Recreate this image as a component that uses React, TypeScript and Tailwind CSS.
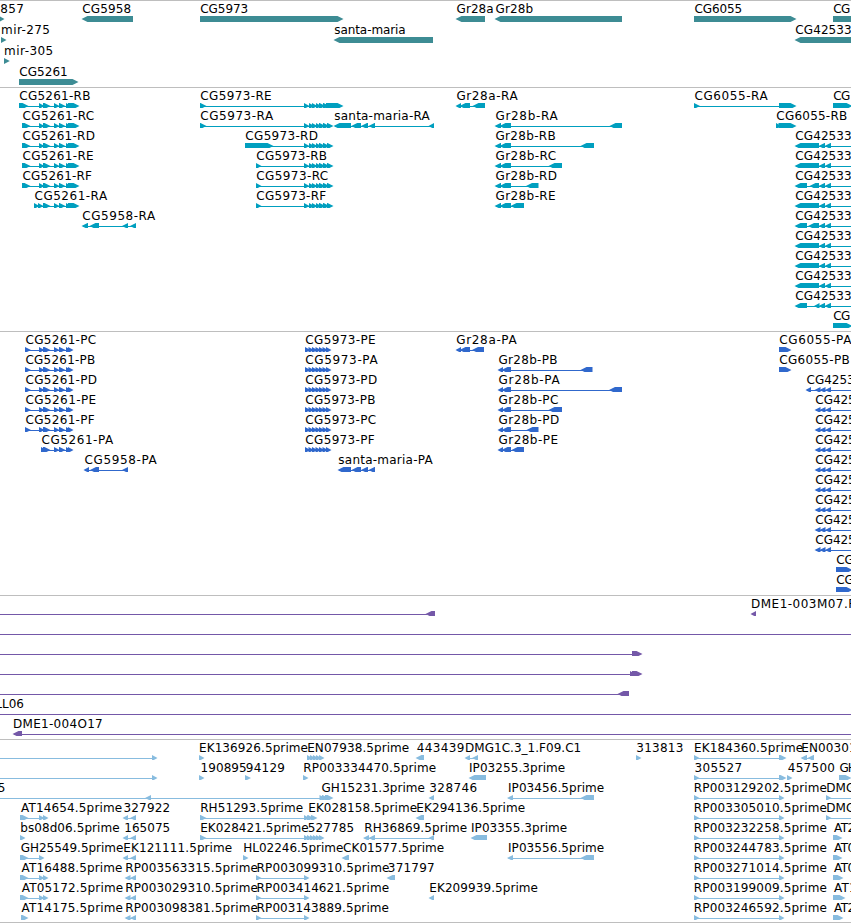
type Exon = [number, number];

type Feature = {
  label?: string;
  // first and last pixel column covered by the label
  from?: number;
  to?: number;
  dir: 1 | -1;
  exons: Exon[];
  line?: Exon;
};

type Track = {
  name: string;
  color: string;
  className: string;
  rowHeight: number;
  rows: Feature[][];
};

const fwd = (label: string, from: number, to: number, exons: Exon[], line?: Exon): Feature => ({
  label,
  from,
  to,
  dir: 1,
  exons,
  line,
});

const rev = (label: string, from: number, to: number, exons: Exon[], line?: Exon): Feature => ({
  label,
  from,
  to,
  dir: -1,
  exons,
  line,
});

// transcripts
const r5261: Exon[] = [[39, 44], [43, 50], [54, 59], [59, 65], [66, 71], [68, 79]];
const r5973: Exon[] = [[304, 309], [309, 314], [312, 317], [316, 321], [319, 325], [323, 329]];
const r5973End: Exon[] = [...r5973, [327, 333]];
const gr28b: Exon[] = [[495, 501], [500, 511]];
const r42533Tail: Exon[] = [[819, 825], [825, 831]];
const r42533 = (...exons: Exon[]) => rev("CG42533", 795.5, 851, [...exons, ...r42533Tail], [796, 851]);

// translations
const p5261: Exon[] = [[39, 44], [43, 50], [54, 59], [59, 65], [66, 71], [68, 73]];
const p5973: Exon[] = [[305, 310], [308.5, 313.5], [312, 317], [315.5, 320.5], [319, 324], [322.5, 327.5], [326, 331]];
const gr28bP: Exon[] = [[498, 503], [502, 511]];
const p425 = () => rev("CG425", 815.5, 855, [[815, 820.5], [820, 825.5], [825.5, 831]], [816, 851]);

// ESTs
const est5261: Exon[] = [[20, 28], [39, 44], [43, 48]];
const est5958: Exon[] = [[123, 128], [130.5, 136]];
const est5958Short: Exon[] = [[125, 130.5], [130.5, 136]];
const rp = (label: string) => fwd(label, 694.5, 826.3, [[694, 699], [779, 784]]);

const genes: Feature[][] = [
  [
    fwd("857", 0.5, 23.3, [[-1, 4]]),
    rev("CG5958", 82.5, 130.5, [[82, 133]]),
    fwd("CG5973", 200.5, 247.5, [[200, 343]]),
    rev("Gr28a", 456.7, 493, [[456, 485]]),
    rev("Gr28b", 495.7, 532.3, [[495, 622]]),
    fwd("CG6055", 694.7, 741.5, [[694, 796]]),
    fwd("CG", 833.5, 849.5, [[833, 870]]),
  ],
  [
    fwd("mir-275", 1.8, 49.3, [[1, 6]]),
    rev("santa-maria", 334.5, 405, [[334, 433]]),
    rev("CG42533", 795.5, 851, [[795, 870]]),
  ],
  [fwd("mir-305", 4.8, 52.5, [[4, 9.3]])],
  [fwd("CG5261", 19.5, 67, [[19, 78]])],
];

const transcripts: Feature[][] = [
  [
    fwd("CG5261-RB", 19.5, 89.7, [[19, 28], ...r5261]),
    fwd("CG5973-RE", 200.5, 271, [[200, 206], ...r5973, [326, 343]]),
    rev("Gr28a-RA", 456.7, 517, [[456, 461], [460, 470], [473, 485]]),
    fwd("CG6055-RA", 694.7, 767, [[694, 699.5], [779, 796]]),
    fwd("CG", 833.5, 849.5, [[833, 852]]),
  ],
  [
    fwd("CG5261-RC", 22.7, 93.5, [[22, 30], ...r5261]),
    fwd("CG5973-RA", 200.5, 272.5, [[200, 206], ...r5973End]),
    rev("santa-maria-RA", 334.5, 429, [[334, 351], [351.7, 361], [361.5, 368], [369, 375], [429, 434]]),
    rev("Gr28b-RA", 495.7, 557, [...gr28b, [610, 622]]),
    fwd("CG6055-RB", 776.5, 846.5, [[776, 781], [778.5, 796]]),
  ],
  [
    fwd("CG5261-RD", 22.7, 94.3, [[22, 30], ...r5261]),
    fwd("CG5973-RD", 245.5, 317.3, [[245, 273], ...r5973End]),
    rev("Gr28b-RB", 495.7, 555, [...gr28b, [581, 594]]),
    r42533([795, 819]),
  ],
  [
    fwd("CG5261-RE", 22.7, 93, [[22, 30], ...r5261]),
    fwd("CG5973-RB", 256.5, 326.3, [[256, 261], ...r5973End]),
    rev("Gr28b-RC", 495.7, 555.5, [...gr28b, [549, 562]]),
    r42533([795, 819]),
  ],
  [
    fwd("CG5261-RF", 22.7, 91.3, [[22, 30], ...r5261]),
    fwd("CG5973-RC", 256.5, 327.5, [[256, 261], ...r5973End]),
    rev("Gr28b-RD", 495.7, 556.3, [...gr28b, [526.5, 538.5]]),
    r42533([795, 807], [810, 819]),
  ],
  [
    fwd("CG5261-RA", 34.7, 106.5, [[34, 39], [38, 43], ...r5261.slice(1)]),
    fwd("CG5973-RF", 256.5, 325.5, [[256, 261], ...r5973End]),
    rev("Gr28b-RE", 495.7, 555, [...gr28b, [511, 524]]),
    r42533([795, 819]),
  ],
  [
    rev("CG5958-RA", 82.5, 154.5, [[82, 88], [90, 99], [122.5, 128], [130.5, 136]]),
    r42533([795, 807], [808.5, 819]),
  ],
  [r42533([795, 819])],
  [r42533([795, 819])],
  [r42533([795, 819])],
  [r42533([795, 807], [814.5, 819.5])],
  [fwd("CG", 833.5, 849.5, [[833, 852]])],
];

const translations: Feature[][] = [
  [
    fwd("CG5261-PC", 25.7, 95.5, [[25, 30.5], ...p5261]),
    fwd("CG5973-PE", 305.5, 375, p5973),
    rev("Gr28a-PA", 456.5, 516, [[456, 461], [460, 470], [472.5, 484]]),
    fwd("CG6055-PA", 779.5, 850.7, [[779, 791]]),
  ],
  [
    fwd("CG5261-PB", 25.7, 94.5, [[25, 30.5], ...p5261]),
    fwd("CG5973-PA", 305.5, 377, p5973),
    rev("Gr28b-PB", 498.7, 556.7, [...gr28bP, [581, 592.5]]),
    fwd("CG6055-PB", 779.5, 849, [[779, 791]]),
  ],
  [
    fwd("CG5261-PD", 25.7, 96.3, [[25, 30.5], ...p5261]),
    fwd("CG5973-PD", 305.5, 376.5, p5973),
    rev("Gr28b-PA", 498.7, 559, [...gr28bP, [609.5, 622]]),
    rev("CG4253", 806.7, 854, [[806, 811], [815, 820.5], [820, 825.5], [825.5, 831]], [807, 851]),
  ],
  [
    fwd("CG5261-PE", 25.7, 95.5, [[25, 30.5], ...p5261]),
    fwd("CG5973-PB", 305.5, 374.7, p5973),
    rev("Gr28b-PC", 498.7, 557.7, [...gr28bP, [549, 562]]),
    p425(),
  ],
  [
    fwd("CG5261-PF", 25.7, 94, [[25, 30.5], ...p5261]),
    fwd("CG5973-PC", 305.5, 375.5, p5973),
    rev("Gr28b-PD", 498.7, 558.5, [...gr28bP, [527, 538.5]]),
    p425(),
  ],
  [
    fwd("CG5261-PA", 41.7, 112.5, [[41, 46], ...p5261.slice(1)]),
    fwd("CG5973-PF", 305.5, 374, p5973),
    rev("Gr28b-PE", 498.7, 557.3, [...gr28bP, [512, 524]]),
    p425(),
  ],
  [
    rev("CG5958-PA", 84.7, 156, [[84, 89], [90.5, 99], [122.5, 128]]),
    rev("santa-maria-PA", 338.5, 432, [[338, 351], [352, 361], [361.5, 368], [369, 375]]),
    p425(),
  ],
  [p425()],
  [p425()],
  [p425()],
  [p425()],
  [fwd("CG", 836.5, 853, [[836, 852]])],
  [fwd("CG", 836.5, 853, [[836, 852]])],
];

const clones: Feature[][] = [
  [
    { dir: -1, exons: [[426, 435]], line: [0, 427] },
    rev("DME1-003M07.F", 751.7, 854.5, [[751, 756]]),
  ],
  [{ dir: 1, exons: [], line: [0, 851] }],
  [{ dir: 1, exons: [[632, 642]], line: [0, 633] }],
  [{ dir: 1, exons: [[630, 635], [632, 642]], line: [0, 631] }],
  [{ dir: -1, exons: [[618, 629]], line: [0, 620] }],
  [fwd("LL06", -4, 23.3, [], [0, 851])],
  [rev("DME1-004O17", 13.7, 102, [[13, 22]], [14, 851])],
];

const ests: Feature[][] = [
  [
    { dir: 1, exons: [[152, 157]], line: [0, 153] },
    fwd("EK136926.5prime", 199.7, 307.3, [[199, 204]]),
    fwd("EN07938.5prime", 307.9, 408.5, [[307, 312], [310, 315], [313, 318], [316, 321], [319, 324]]),
    rev("443439", 417, 463.7, [[416, 424]]),
    rev("DMG1C.3_1.F09.C1", 465.7, 580.5, [[465, 470], [472.5, 478]]),
    fwd("313813", 636.5, 682.7, [[636, 641]]),
    fwd("EK184360.5prime", 694.7, 802.5, [[694, 699], [779, 786]]),
    rev("EN00301", 802, 856, [[801, 807], [808, 814]]),
  ],
  [
    { dir: 1, exons: [[152, 157]], line: [0, 153] },
    fwd("190895", 200.7, 246, [[199, 204]]),
    fwd("94129", 246, 284.3, [[245, 250.5]]),
    fwd("RP003334470.5prime", 304, 435.5, [[303, 308]]),
    rev("IP03255.3prime", 469.7, 564.5, [[469, 486]]),
    fwd("305527", 694.7, 741.5, [[694, 699], [779, 786]]),
    fwd("457500", 788, 834.3, [[787, 792]]),
    fwd("GH", 839.7, 856, [[839, 851]]),
  ],
  [
    fwd("5", -2, 4.2, [[319.5, 325], [322, 328], [325, 333]], [0, 322]),
    { dir: -1, exons: [[145.5, 151]] },
    fwd("GH15231.3prime", 321.7, 424.3, []),
    rev("328746", 429.5, 476.5, [[429, 434]]),
    rev("IP03456.5prime", 508.7, 603.5, [[507.5, 513], [581, 594]]),
    rp("RP003129202.5prime"),
    fwd("DMG", 827, 854.5, [[826, 831]], [826, 851]),
  ],
  [
    fwd("AT14654.5prime", 20.7, 121.5, est5261),
    rev("327922", 123.7, 169.5, est5958),
    fwd("RH51293.5prime", 200.9, 302.5, [[200, 206], [304, 309], [307, 312], [311, 317]]),
    fwd("EK028158.5prime", 308.9, 416.5, [[308, 313]]),
    rev("EK294136.5prime", 417, 524.5, [[416, 424]]),
    rp("RP003305010.5prime"),
    fwd("DMG", 827, 854.5, [[826, 831]], [826, 851]),
  ],
  [
    fwd("bs08d06.5prime", 20.9, 119, [[20, 25]]),
    rev("165075", 124.5, 169.5, est5958),
    fwd("EK028421.5prime", 200.9, 308, [[200, 206], [304, 309], [307, 312]]),
    fwd("527785", 308, 353.5, [[310, 315], [313, 318], [316, 321], [319, 324]]),
    rev("RH36869.5prime", 365, 466.5, [[363.5, 369], [369, 375], [429, 434]]),
    rev("IP03355.3prime", 471.7, 566.5, [[471, 487]]),
    rp("RP003232258.5prime"),
    fwd("AT2", 833.7, 854.5, [[833, 842]]),
  ],
  [
    fwd("GH25549.5prime", 20.9, 122.7, est5261.slice(0, 2)),
    rev("EK121111.5prime", 124, 231.5, est5958),
    fwd("HL02246.5prime", 243.9, 342.7, [[243, 248]]),
    rev("CK01577.5prime", 343.3, 443.5, [[342, 349]]),
    rev("IP03556.5prime", 508.7, 603.5, [[507.5, 513], [581, 594]]),
    rp("RP003244783.5prime"),
    fwd("AT0", 833.7, 854.5, [[833, 842]]),
  ],
  [
    fwd("AT16488.5prime", 21.3, 121.7, est5261),
    rev("RP003563315.5prime", 126, 257.3, est5958Short),
    fwd("RP003099310.5prime", 257.3, 388.7, [[256, 261], [304, 309]]),
    rev("371797", 388, 434, [[387, 395]]),
    rp("RP003271014.5prime"),
    fwd("AT0", 833.7, 854.5, [[833, 843]]),
  ],
  [
    fwd("AT05172.5prime", 21.5, 122.5, est5261),
    rev("RP003029310.5prime", 126, 257.3, est5958Short),
    fwd("RP003414621.5prime", 257.3, 388.5, [[256, 261], [304, 309]]),
    rev("EK209939.5prime", 430, 537.3, [[429, 434]]),
    rp("RP003199009.5prime"),
    fwd("AT1", 833.7, 856, [[833, 845]]),
  ],
  [
    fwd("AT14175.5prime", 21.3, 122.3, [[21, 28]]),
    rev("RP003098381.5prime", 126, 257.3, est5958Short),
    fwd("RP003143889.5prime", 257.3, 388.3, [[256, 261], [304, 309]]),
    rp("RP003246592.5prime"),
    fwd("AT2", 833.7, 854.5, [[833, 843]]),
  ],
];

const tracks: Track[] = [
  { name: "genes", color: "#3d8c94", className: "pb-[2px]", rowHeight: 21, rows: genes },
  { name: "transcripts", color: "#009fbf", className: "pb-[3px]", rowHeight: 20, rows: transcripts },
  { name: "translations", color: "#3068cc", className: "pb-[3px]", rowHeight: 20, rows: translations },
  { name: "clones", color: "#7458a8", className: "pb-[3px]", rowHeight: 20, rows: clones },
  { name: "ests", color: "#88bcdf", className: "pb-[2px]", rowHeight: 20, rows: ests },
];

const leftBearing = (c: string) => {
  if ("REDIHLPmb".includes(c)) return 0.7;
  if (c === "A") return -0.3;
  return 0.2;
};

const arrowPoints = ([a, b]: Exon, dir: 1 | -1) => {
  const head = Math.min(5.5, b - a);
  if (dir === 1) {
    return `${a},15 ${b - head},15 ${b + 0.5},18 ${b - head},21 ${a},21`;
  }
  return `${b},15 ${a + head},15 ${a - 0.5},18 ${a + head},21 ${b},21`;
};

const Glyph = ({ feature, color }: { feature: Feature; color: string }) => {
  const { label, from = 0, to = 0, dir, exons } = feature;
  const line: Exon | undefined =
    feature.line ?? (exons.length > 1 ? [exons[0][0] + 1, exons[exons.length - 1][1] - 2] : undefined);
  const pad = label ? leftBearing(label[0]) : 0;

  return (
    <g>
      {line && <rect x={line[0]} y={18} width={line[1] - line[0]} height={1} fill={color} />}
      {exons.map((exon, i) => (
        <polygon key={i} points={arrowPoints(exon, dir)} fill={color} />
      ))}
      {label && (
        <text x={from - pad} y={12} textLength={to - from + pad + 0.7} fill="#000">
          {label}
        </text>
      )}
    </g>
  );
};

const TrackPanel = ({ track }: { track: Track }) => (
  <section className={`flex flex-col border-t border-[#bebebe] ${track.className}`}>
    {track.rows.map((row, i) => (
      <svg key={i} width={851} height={track.rowHeight} className="block shrink-0 overflow-hidden">
        {row.map((feature, j) => (
          <Glyph key={j} feature={feature} color={track.color} />
        ))}
      </svg>
    ))}
  </section>
);

export default function App() {
  return (
    <main className="flex h-[923px] w-[851px] flex-col overflow-hidden border-b border-[#bebebe] bg-white font-['DejaVu_Sans',sans-serif] text-[12px]">
      {tracks.map(track => (
        <TrackPanel key={track.name} track={track} />
      ))}
    </main>
  );
}
